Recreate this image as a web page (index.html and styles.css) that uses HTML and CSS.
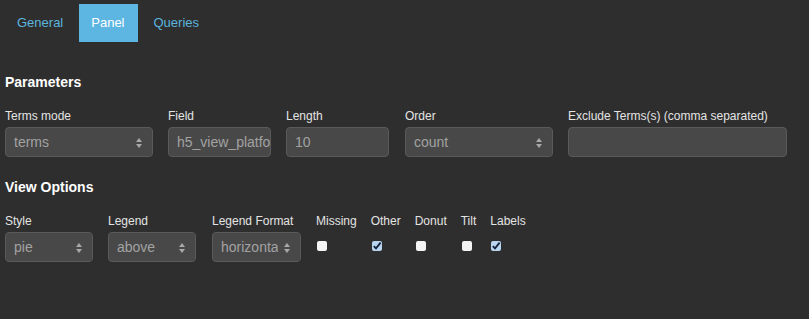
FILE: index.html
```html
<!DOCTYPE html>
<html lang="en">
<head>
  <meta charset="UTF-8">
  <title>Panel Editor</title>
  <link rel="stylesheet" href="styles.css">
</head>
<body>
  <ul class="tabs">
    <li class="tab">General</li>
    <li class="tab active">Panel</li>
    <li class="tab">Queries</li>
  </ul>

  <div class="section">
    <h4>Parameters</h4>
    <div class="row">
      <div class="field w148">
        <label>Terms mode</label>
        <div class="select">terms<span class="arrows"></span></div>
      </div>
      <div class="field w103">
        <label>Field</label>
        <div class="input">h5_view_platform</div>
      </div>
      <div class="field w103">
        <label>Length</label>
        <div class="input">10</div>
      </div>
      <div class="field w148 shift">
        <label>Order</label>
        <div class="select">count<span class="arrows"></span></div>
      </div>
      <div class="field w219">
        <label>Exclude Terms(s) (comma separated)</label>
        <div class="input"></div>
      </div>
    </div>

    <h4 class="second">View Options</h4>
    <div class="row">
      <div class="field w88">
        <label>Style</label>
        <div class="select">pie<span class="arrows"></span></div>
      </div>
      <div class="field w88">
        <label>Legend</label>
        <div class="select">above<span class="arrows"></span></div>
      </div>
      <div class="field w89 shift">
        <label>Legend Format</label>
        <div class="select">horizontal<span class="arrows"></span></div>
      </div>
      <div class="checks">
        <div class="field">
          <label>Missing</label>
          <div class="check-row"><span class="checkbox"></span></div>
        </div>
        <div class="field">
          <label>Other</label>
          <div class="check-row"><span class="checkbox checked"><svg width="10" height="10" viewBox="0 0 10 10"><path d="M1.8 5.2 L4 7.4 L8.6 1.6" fill="none" stroke="#13213a" stroke-width="1.8"/></svg></span></div>
        </div>
        <div class="field">
          <label>Donut</label>
          <div class="check-row"><span class="checkbox"></span></div>
        </div>
        <div class="field">
          <label>Tilt</label>
          <div class="check-row"><span class="checkbox"></span></div>
        </div>
        <div class="field">
          <label>Labels</label>
          <div class="check-row"><span class="checkbox checked"><svg width="10" height="10" viewBox="0 0 10 10"><path d="M1.8 5.2 L4 7.4 L8.6 1.6" fill="none" stroke="#13213a" stroke-width="1.8"/></svg></span></div>
        </div>
      </div>
    </div>
  </div>
</body>
</html>
```

FILE: styles.css
```css
body {
  margin: 0;
  background-color: #2e2e2e;
  font-family: "Liberation Sans", Arial, sans-serif;
  color: #e4e4e4;
  font-size: 12px;
}
.tabs {
  list-style: none;
  margin: 0;
  padding: 4px 0 0 5px;
  display: flex;
  gap: 4px;
}
.tab {
  height: 38px;
  line-height: 38px;
  padding: 0 12px;
  font-size: 13px;
  color: #5bb5df;
}
.tab.active {
  padding: 0 13px 0 12px;
  background-color: #5db6e2;
  color: #fff;
}
.section {
  padding: 0 5px;
}
h4 {
  margin: 30px 0 16px;
  font-size: 14px;
  line-height: 20px;
  color: #fff;
}
h4.second {
  margin: 20px 0 16px;
}
.row {
  display: flex;
  gap: 15px;
}
.checks {
  display: flex;
  gap: 14px;
}
.field.shift {
  margin-left: 1px;
}
.field label {
  display: block;
  line-height: 16px;
  margin-bottom: 3px;
  white-space: nowrap;
}
.w148 { width: 148px; }
.w103 { width: 103px; }
.w219 { width: 219px; }
.w88 { width: 88px; }
.w89 { width: 89px; }
.select,
.input {
  position: relative;
  box-sizing: border-box;
  height: 30px;
  line-height: 28px;
  border: 1px solid #5a5a5a;
  border-radius: 4px;
  background-color: #484848;
  color: #a2a2a2;
  font-size: 14px;
  padding: 0 8px;
  white-space: nowrap;
  overflow: hidden;
}
.select {
  padding-right: 22px;
}
.arrows {
  position: absolute;
  right: 10px;
  top: 10px;
  width: 0;
  height: 0;
  border-left: 3px solid transparent;
  border-right: 3px solid transparent;
  border-bottom: 4px solid #a8a8a8;
  z-index: 1;
}
.arrows::after {
  content: "";
  position: absolute;
  left: -3px;
  top: 6px;
  border-left: 3px solid transparent;
  border-right: 3px solid transparent;
  border-top: 4px solid #a8a8a8;
}
.select::after {
  content: "";
  position: absolute;
  right: 0;
  top: 0;
  bottom: 0;
  width: 22px;
  background-color: #484848;
}
.check-row {
  height: 30px;
  display: flex;
  align-items: center;
  padding-left: 1px;
}
.checkbox {
  display: block;
  width: 10px;
  height: 10px;
  margin-top: -2px;
  border-radius: 2px;
  background-color: #f4f4f4;
}
.checkbox.checked {
  background-color: #b9d4f1;
}
.checkbox svg {
  display: block;
}
```
